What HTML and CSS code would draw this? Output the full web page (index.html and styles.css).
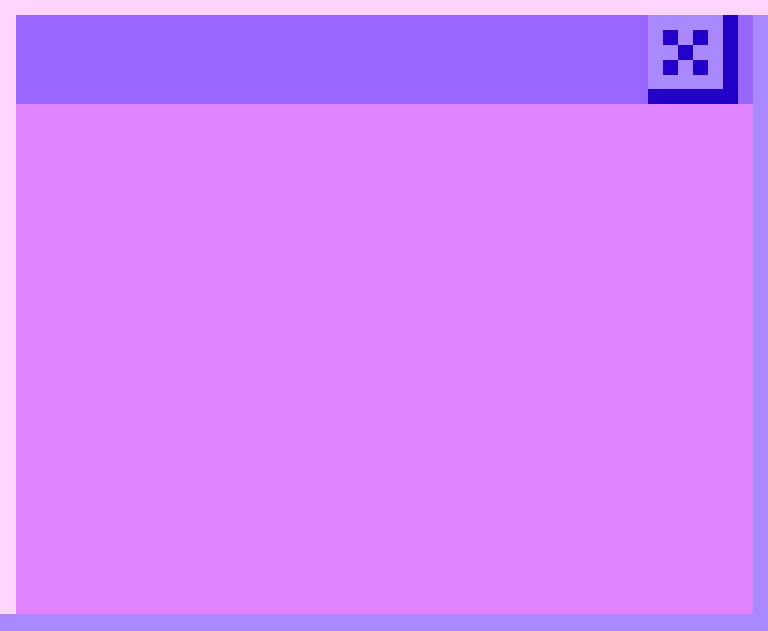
FILE: index.html
```html
<!DOCTYPE html>
<html>
<head>
<meta charset="utf-8">
<link rel="stylesheet" href="styles.css">
</head>
<body>
<div class="window">
  <div class="frame">
    <div class="titlebar">
      <div class="close" role="button" aria-label="Close">
        <div class="x-grid">
          <span class="cell on"></span><span class="cell"></span><span class="cell on"></span>
          <span class="cell"></span><span class="cell on"></span><span class="cell"></span>
          <span class="cell on"></span><span class="cell"></span><span class="cell on"></span>
        </div>
      </div>
    </div>
    <div class="content"></div>
  </div>
</div>
</body>
</html>
```
FILE: styles.css
```css
html, body {
  margin: 0;
  padding: 0;
  width: 768px;
  height: 631px;
  overflow: hidden;
  background: #ffd6fb;
}
.window {
  box-sizing: border-box;
  width: 768px;
  height: 631px;
  border-top: 15px solid #ffd6fb;
  border-bottom: 17px solid #aa88ff;
  display: flex;
}
.frame {
  flex: 1;
  display: flex;
  flex-direction: column;
  border-left: 16px solid #ffd6fb;
  border-right: 15px solid #aa88ff;
}
.titlebar {
  height: 89px;
  background: #9966ff;
  display: flex;
  justify-content: flex-end;
  padding-right: 15px;
}
.close {
  box-sizing: border-box;
  width: 90px;
  height: 89px;
  padding: 15px 0 0 15px;
  border-right: 15px solid #2200c8;
  border-bottom: 15px solid #2200c8;
  background: #aa88ff;
  cursor: pointer;
}
.x-grid {
  display: grid;
  grid-template-columns: repeat(3, 15px);
  grid-template-rows: repeat(3, 15px);
  width: 45px;
  height: 45px;
}
.cell.on {
  background: #2200c8;
}
.content {
  flex: 1;
  background: #e083ff;
}
```
